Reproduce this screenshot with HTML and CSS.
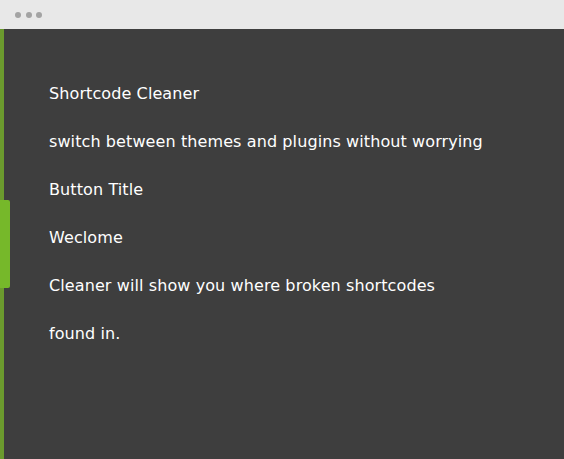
FILE: index.html
```html
<!DOCTYPE html>
<html>
<head>
    <meta charset="UTF-8">
    <title>Shortcode Cleaner</title>
    <link rel="stylesheet" href="styles.css">
</head>
<body>
<div class="window">
    <div class="title-bar">
        <span class="dot"></span>
        <span class="dot"></span>
        <span class="dot"></span>
    </div>
    <div class="screen">
        <div class="tab"></div>
        <ul class="lines">
            <li>Shortcode Cleaner</li>
            <li>switch between themes and plugins without worrying</li>
            <li>Button Title</li>
            <li>Weclome</li>
            <li>Cleaner will show you where broken shortcodes</li>
            <li>found in.</li>
        </ul>
    </div>
</div>
</body>
</html>
```

FILE: styles.css
```css
body {
    margin: 0;
    padding: 0;
    background-color: #3E3E3E;
    font-family: "DejaVu Sans", sans-serif;
}

.window {
    width: 564px;
    height: 459px;
    display: flex;
    flex-direction: column;
}

.title-bar {
    height: 29px;
    background-color: #E8E8E8;
    display: flex;
    align-items: center;
    gap: 4.5px;
    padding-left: 15px;
    flex-shrink: 0;
}

.dot {
    width: 6px;
    height: 6px;
    border-radius: 50%;
    background-color: #A3A3A3;
}

.screen {
    position: relative;
    flex: 1;
    background-color: #3E3E3E;
    border-left: 4px solid #6B9A2E;
}

.tab {
    position: absolute;
    left: -4px;
    top: 171px;
    width: 10px;
    height: 88px;
    background-color: #76B82A;
    border-radius: 0 2px 2px 0;
}

.lines {
    list-style: none;
    margin: 0;
    padding: 55px 0 0 45px;
}

.lines li {
    color: #FFFFFF;
    font-size: 16px;
    letter-spacing: 0.1px;
    line-height: 20px;
    margin-bottom: 28px;
}
```
